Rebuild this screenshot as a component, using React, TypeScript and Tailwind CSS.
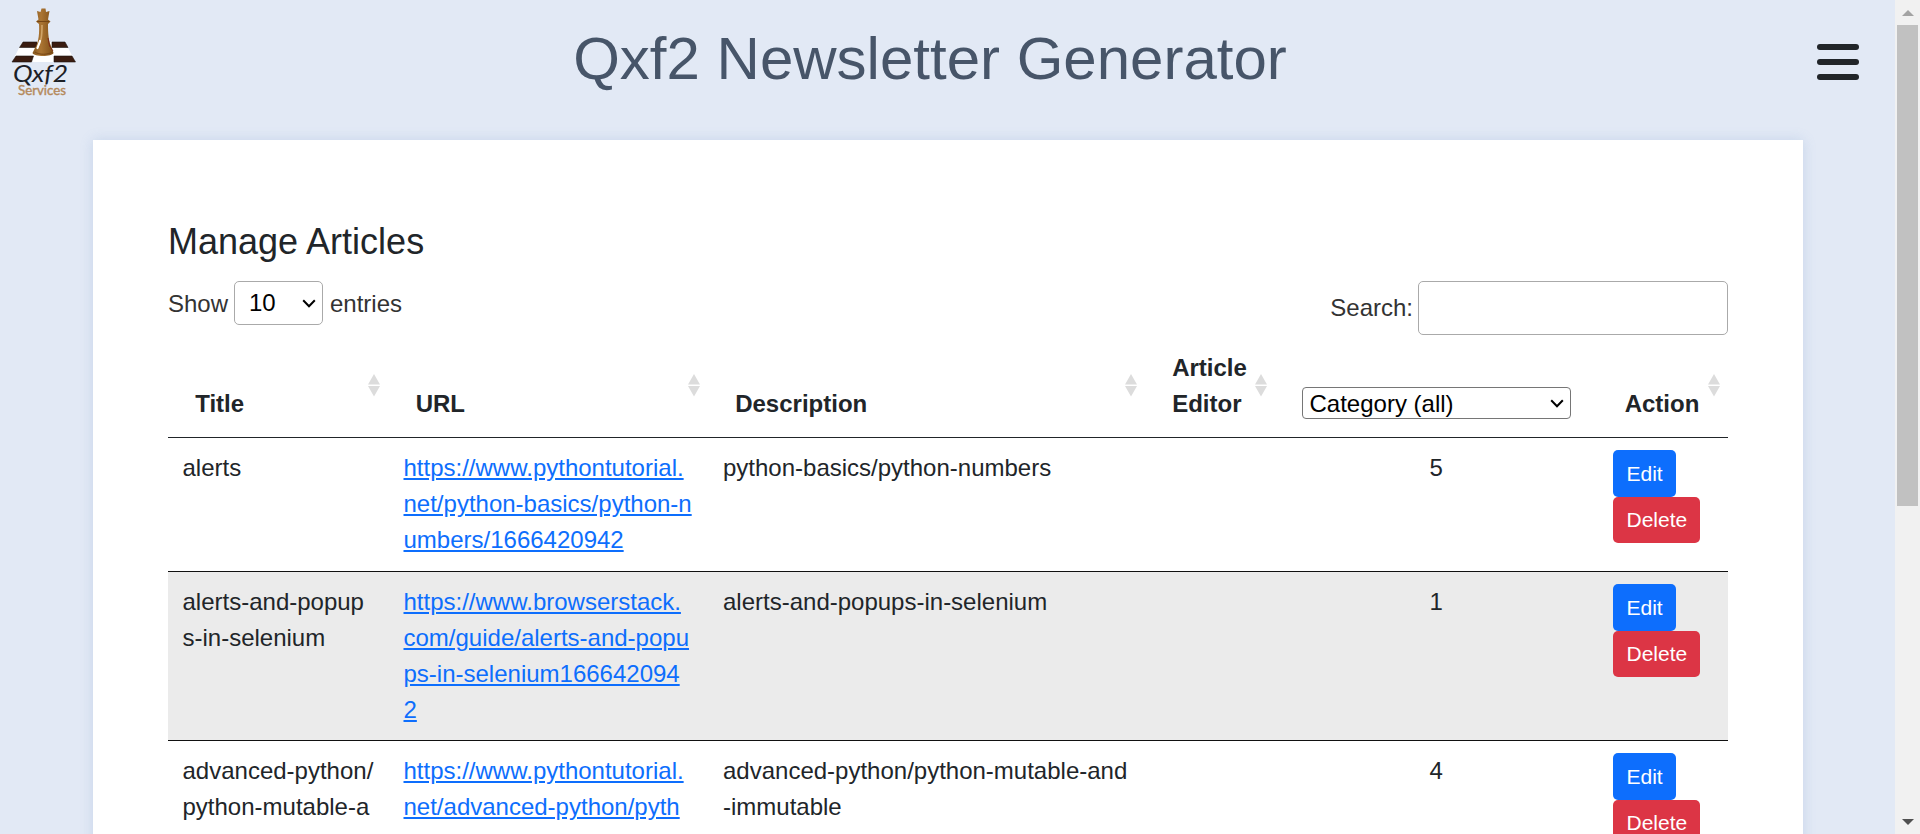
import React from "react";

type Article = {
  title: string;
  url: string;
  description: string;
  editor: string;
  category: string;
  height: string;
};

const articles: Article[] = [
  {
    title: "alerts",
    url: "https://www.pythontutorial.\nnet/python-basics/python-n\numbers/1666420942",
    description: "python-basics/python-numbers",
    editor: "",
    category: "5",
    height: "h-[133px]",
  },
  {
    title: "alerts-and-popup\ns-in-selenium",
    url: "https://www.browserstack.\ncom/guide/alerts-and-popu\nps-in-selenium166642094\n2",
    description: "alerts-and-popups-in-selenium",
    editor: "",
    category: "1",
    height: "h-[169px] border-t border-[#111] bg-[#ebebeb]",
  },
  {
    title: "advanced-python/\npython-mutable-a",
    url: "https://www.pythontutorial.\nnet/advanced-python/pyth",
    description: "advanced-python/python-mutable-and\n-immutable",
    editor: "",
    category: "4",
    height: "h-[169px] border-t border-[#111]",
  },
];

const columns = "grid grid-cols-[220.5px_319.5px_437px_130px_322.5px_130.5px]";

function Logo() {
  return (
    <svg width="70" height="92" viewBox="0 0 70 92" className="block">
      <defs>
        <linearGradient id="wood" x1="0" x2="1" y1="0" y2="0">
          <stop offset="0" stopColor="#84561d" />
          <stop offset="0.4" stopColor="#ab7533" />
          <stop offset="1" stopColor="#7d4d16" />
        </linearGradient>
      </defs>
      <path d="M13 34H56L66.500 54H3Z" fill="#fff" />
      <path d="M14 34H28V39.500H10.500ZM43 34H56L59 39.500H43ZM7 48H24.500L22.500 54H3ZM45 48H63L66.500 54H45Z" fill="#3a1c10" stroke="#1d1512" strokeWidth="0.600" />
      <path d="M28 3L31.500 4L32.500 .5H36.500L37 4L40.500 3L39 11.500L41.500 13.500L39 16C39 25 39.500 34 43 40L44.500 45C43 49 25 49 23.500 45L26 40C30 34 30.500 24 30 16L27 13.500L29.500 11.500Z" fill="url(#wood)" />
      <path d="M33 17C33 27 32.500 34 28 40" fill="none" stroke="#d0a468" strokeWidth="1.600" />
      <path d="M39 30L40.500 38L44 43" fill="none" stroke="#7a2415" strokeWidth="0.900" />
      <path d="M31 33L28.500 40" stroke="#fff" strokeWidth="2.200" strokeLinecap="round" />
      <path d="M28 13.500H40M26 44C30 47 39 47 43 44" fill="none" stroke="#754514" strokeWidth="1" />
      <text x="4" y="74" textLength="55" lengthAdjust="spacingAndGlyphs" fill="#1c2026" fontFamily="Lato, sans-serif" fontStyle="italic" fontSize="23">Qxf2</text>
      <text x="9" y="86.500" textLength="48" lengthAdjust="spacingAndGlyphs" fill="#b58a5c" stroke="#b58a5c" strokeWidth="0.400" fontFamily="Lato, sans-serif" fontSize="12.500">Services</text>
    </svg>
  );
}

function Chevron({ className }: { className: string }) {
  return (
    <svg width="14" height="9" viewBox="0 0 14 9" className={`pointer-events-none absolute ${className}`}>
      <path d="M1.200 1.300L7 7.200L12.800 1.300" fill="none" stroke="#000" strokeWidth="2" />
    </svg>
  );
}

function Heading({ children }: { children: React.ReactNode }) {
  return (
    <div className="relative flex items-end pb-[15px] pl-[27.2px] font-bold">
      <span className="whitespace-pre-line">{children}</span>
      <svg width="12" height="23" viewBox="0 0 12 23" className="absolute right-[8.5px] top-[39px]">
        <path d="M6 0L12 10.500H0ZM0 12H12L6 22.500Z" fill="#dcdcdc" />
      </svg>
    </div>
  );
}

export default function App() {
  return (
    <div className="flex h-[834px] w-full overflow-hidden bg-[#e2e9f5] font-['Liberation_Sans',Arial,sans-serif] text-[24px] leading-[36px] text-[#212529]">
      <div className="flex min-w-0 flex-1 flex-col">
        <header className="flex h-[140px] shrink-0 items-start pl-[9px] pr-9">
          <div className="w-[70px] pt-2">
            <Logo />
          </div>
          <h1 className="flex-1 pr-[36px] pt-[23px] text-center text-[60px] leading-[72px] text-[#475569]">
            Qxf2 Newsletter Generator
          </h1>
          <button aria-label="Menu" className="mt-11 flex w-[42px] flex-col gap-[9px]">
            <span className="h-1.5 w-full rounded-full bg-[#212529]" />
            <span className="h-1.5 w-full rounded-full bg-[#212529]" />
            <span className="h-1.5 w-full rounded-full bg-[#212529]" />
          </button>
        </header>

        <main className="ml-[93px] h-[1400px] w-[1710px] shrink-0 bg-white px-[75px] pt-[80px] shadow-[0_0_12px_rgba(100,140,200,0.22)]">
          <h2 className="text-[36px] leading-[43px]">Manage Articles</h2>
          <div className="flex h-[72px] items-start justify-between pt-[18px] text-[#333]">
            <label className="flex">
              <span className="w-[66px] pt-[5px]">Show</span>
              <span className="relative h-11 w-[89px]">
                <select className="block h-11 w-full appearance-none rounded-[5px] border border-[#aaa] bg-transparent pl-[14px] text-black">
                  <option>10</option>
                </select>
                <Chevron className="right-[7px] top-[18px]" />
              </span>
              <span className="pl-[7px] pt-[5px]">entries</span>
            </label>
            <label className="flex">
              <span className="pr-[5px] pt-[9px]">Search:</span>
              <input className="h-[54px] w-[310px] rounded-[5px] border border-[#aaa] bg-transparent px-2" />
            </label>
          </div>

          <div className={`${columns} h-[103px] border-b border-[#212529]`}>
            <Heading>Title</Heading>
            <Heading>URL</Heading>
            <Heading>Description</Heading>
            <Heading>{"Article\nEditor"}</Heading>
            <div className="flex items-end px-[27px] pb-[18px]">
              <span className="relative h-8 w-full">
                <select className="block h-8 w-full appearance-none rounded-[4px] border border-[#767676] bg-white pl-[6.5px] pt-px leading-[30px] text-black">
                  <option>Category (all)</option>
                </select>
                <Chevron className="right-[7px] top-[12px]" />
              </span>
            </div>
            <Heading>Action</Heading>
          </div>

          {articles.map((article) => (
            <div key={article.title} className={`${columns} ${article.height} whitespace-pre-line`}>
              <div className="py-3 pl-[14.5px]">{article.title}</div>
              <div className="py-3 pl-[15px]">
                <a href="#" className="text-[#0d6efd] underline">{article.url}</a>
              </div>
              <div className="py-3 pl-[15px]">{article.description}</div>
              <div className="py-3 pl-[15px]">{article.editor}</div>
              <div className="py-3 text-center">{article.category}</div>
              <div className="flex flex-col items-start py-3 pl-[15.5px] text-[21px] leading-[31.5px] text-white">
                <button className="rounded-[5px] bg-[#0d6efd] py-[7.5px] pl-[13.5px] pr-[13px]">Edit</button>
                <button className="rounded-[5px] bg-[#dc3545] py-[7.5px] pl-[13.5px] pr-[12.5px]">Delete</button>
              </div>
            </div>
          ))}
        </main>
      </div>

      <div className="flex w-[25px] shrink-0 flex-col items-center bg-[#f1f1f1]">
        <div className="flex h-[25px] items-center justify-center">
          <svg width="12" height="6" viewBox="0 0 12 6"><path d="M6 0L12 6H0Z" fill="#a3a3a3" /></svg>
        </div>
        <div className="h-[481px] w-[21px] bg-[#c1c1c1]" />
        <div className="mt-auto flex h-[25px] items-center justify-center">
          <svg width="12" height="6" viewBox="0 0 12 6"><path d="M0 0H12L6 6Z" fill="#505050" /></svg>
        </div>
      </div>
    </div>
  );
}
